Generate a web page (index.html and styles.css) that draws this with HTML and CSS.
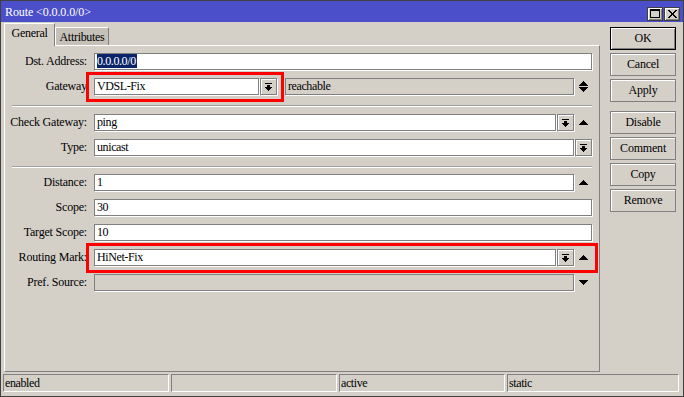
FILE: index.html
```html
<!DOCTYPE html>
<html>
<head>
<meta charset="utf-8">
<link rel="stylesheet" href="styles.css">
</head>
<body>
<div class="window">
  <div class="titlebar">
    <span class="title">Route &lt;0.0.0.0/0&gt;</span>
    <div class="tbtns">
      <span class="tbtn"><svg width="10" height="9" viewBox="0 0 10 9" shape-rendering="crispEdges"><rect x="0" y="0" width="10" height="2" fill="#000"/><rect x="0" y="0" width="1" height="9" fill="#000"/><rect x="9" y="0" width="1" height="9" fill="#000"/><rect x="0" y="8" width="10" height="1" fill="#000"/></svg></span>
      <span class="tbtn"><svg width="9" height="8" viewBox="0 0 9 8" shape-rendering="crispEdges"><path d="M0 0h2l2.5 3 2.5-3h2l-3.5 4 3.5 4h-2l-2.5-3-2.5 3h-2l3.5-4z" fill="#000"/></svg></span>
    </div>
  </div>
  <div class="main">
    <div class="left">
      <div class="tabs">
        <div class="tab active">General</div>
        <div class="tab inactive">Attributes</div>
      </div>
      <div class="panel">
        <div class="row">
          <div class="label">Dst. Address:</div>
          <div class="field grow"><span class="sel">0.0.0.0/0</span></div>
        </div>
        <div class="row">
          <div class="label">Gateway</div>
          <div class="field gw">VDSL-Fix</div>
          <div class="slot"><span class="dd"><svg width="9" height="8" viewBox="0 0 9 8" shape-rendering="crispEdges"><rect x="1" y="0" width="7" height="1"/><rect x="3" y="2" width="3" height="2"/><rect x="1" y="4" width="7" height="1"/><rect x="2" y="5" width="5" height="1"/><rect x="3" y="6" width="3" height="1"/><rect x="4" y="7" width="1" height="1"/></svg></span></div>
          <div class="field grow disabled reach">reachable</div>
          <div class="slot icon"><svg width="9" height="11" viewBox="0 0 9 11" shape-rendering="crispEdges"><rect x="4" y="0" width="1" height="1"/><rect x="3" y="1" width="3" height="1"/><rect x="2" y="2" width="5" height="1"/><rect x="1" y="3" width="7" height="1"/><rect x="0" y="4" width="9" height="1"/><rect x="0" y="6" width="9" height="1"/><rect x="1" y="7" width="7" height="1"/><rect x="2" y="8" width="5" height="1"/><rect x="3" y="9" width="3" height="1"/><rect x="4" y="10" width="1" height="1"/></svg></div>
        </div>
        <div class="sep sep1"></div>
        <div class="row">
          <div class="label">Check Gateway:</div>
          <div class="field grow">ping</div>
          <div class="slot"><span class="dd"><svg width="9" height="8" viewBox="0 0 9 8" shape-rendering="crispEdges"><rect x="1" y="0" width="7" height="1"/><rect x="3" y="2" width="3" height="2"/><rect x="1" y="4" width="7" height="1"/><rect x="2" y="5" width="5" height="1"/><rect x="3" y="6" width="3" height="1"/><rect x="4" y="7" width="1" height="1"/></svg></span></div>
          <div class="slot icon"><svg width="9" height="5" viewBox="0 0 9 5" shape-rendering="crispEdges"><rect x="4" y="0" width="1" height="1"/><rect x="3" y="1" width="3" height="1"/><rect x="2" y="2" width="5" height="1"/><rect x="1" y="3" width="7" height="1"/><rect x="0" y="4" width="9" height="1"/></svg></div>
        </div>
        <div class="row">
          <div class="label">Type:</div>
          <div class="field grow">unicast</div>
          <div class="slot"><span class="dd"><svg width="9" height="8" viewBox="0 0 9 8" shape-rendering="crispEdges"><rect x="1" y="0" width="7" height="1"/><rect x="3" y="2" width="3" height="2"/><rect x="1" y="4" width="7" height="1"/><rect x="2" y="5" width="5" height="1"/><rect x="3" y="6" width="3" height="1"/><rect x="4" y="7" width="1" height="1"/></svg></span></div>
        </div>
        <div class="sep sep2"></div>
        <div class="row">
          <div class="label">Distance:</div>
          <div class="field grow">1</div>
          <div class="slot icon"><svg width="9" height="5" viewBox="0 0 9 5" shape-rendering="crispEdges"><rect x="4" y="0" width="1" height="1"/><rect x="3" y="1" width="3" height="1"/><rect x="2" y="2" width="5" height="1"/><rect x="1" y="3" width="7" height="1"/><rect x="0" y="4" width="9" height="1"/></svg></div>
        </div>
        <div class="row">
          <div class="label">Scope:</div>
          <div class="field grow">30</div>
        </div>
        <div class="row">
          <div class="label">Target Scope:</div>
          <div class="field grow">10</div>
        </div>
        <div class="row">
          <div class="label">Routing Mark:</div>
          <div class="field grow">HiNet-Fix</div>
          <div class="slot"><span class="dd"><svg width="9" height="8" viewBox="0 0 9 8" shape-rendering="crispEdges"><rect x="1" y="0" width="7" height="1"/><rect x="3" y="2" width="3" height="2"/><rect x="1" y="4" width="7" height="1"/><rect x="2" y="5" width="5" height="1"/><rect x="3" y="6" width="3" height="1"/><rect x="4" y="7" width="1" height="1"/></svg></span></div>
          <div class="slot icon"><svg width="9" height="5" viewBox="0 0 9 5" shape-rendering="crispEdges"><rect x="4" y="0" width="1" height="1"/><rect x="3" y="1" width="3" height="1"/><rect x="2" y="2" width="5" height="1"/><rect x="1" y="3" width="7" height="1"/><rect x="0" y="4" width="9" height="1"/></svg></div>
        </div>
        <div class="row">
          <div class="label">Pref. Source:</div>
          <div class="field grow disabled"></div>
          <div class="slot icon"><svg width="9" height="5" viewBox="0 0 9 5" shape-rendering="crispEdges"><rect x="0" y="0" width="9" height="1"/><rect x="1" y="1" width="7" height="1"/><rect x="2" y="2" width="5" height="1"/><rect x="3" y="3" width="3" height="1"/><rect x="4" y="4" width="1" height="1"/></svg></div>
        </div>
        <div class="mark mark-gw"></div>
        <div class="mark mark-rm"></div>
      </div>
    </div>
    <div class="buttons">
      <div class="btn default">OK</div>
      <div class="btn">Cancel</div>
      <div class="btn">Apply</div>
      <div class="btn spaced">Disable</div>
      <div class="btn">Comment</div>
      <div class="btn">Copy</div>
      <div class="btn">Remove</div>
    </div>
  </div>
  <div class="status">
    <div class="cell">enabled</div>
    <div class="cell"></div>
    <div class="cell">active</div>
    <div class="cell last">static</div>
  </div>
</div>
</body>
</html>
```
FILE: styles.css
```css
* { box-sizing: border-box; }
html, body { margin: 0; padding: 0; }
body {
  width: 684px;
  height: 397px;
  overflow: hidden;
  background: #d4d0c8;
  font-family: "Liberation Serif", "Times New Roman", serif;
  font-size: 12px;
  color: #000;
}
.window {
  width: 684px;
  height: 397px;
  border: 1px solid #404040;
  background: #d4d0c8;
  display: flex;
  flex-direction: column;
}
.titlebar {
  height: 21px;
  background: #4c4fca;
  display: flex;
  align-items: center;
  justify-content: space-between;
  padding: 0 3px 0 4px;
}
.title {
  color: #fff;
  font-size: 12px;
  letter-spacing: -0.1px;
  line-height: 14px;
  margin-top: 1px;
}
.tbtns { display: flex; gap: 1px; margin-top: 4px; }
.tbtn {
  width: 16px;
  height: 14px;
  background: #d4d0c8;
  border: 1px solid #404040;
  box-shadow: inset 1px 1px #fff, inset -1px -1px #808080;
  display: flex;
  align-items: center;
  justify-content: center;
}
.tbtn svg { display: block; }
.main {
  display: flex;
  padding: 0 7px 0 3px;
  gap: 10px;
}
.left { width: 597px; display: flex; flex-direction: column; }
.tabs {
  height: 23px;
  display: flex;
  align-items: flex-end;
}
.tab {
  letter-spacing: -0.3px;
  display: flex;
  align-items: center;
  justify-content: center;
  border-top: 1px solid #fff;
  border-left: 1px solid #fff;
  border-right: 1px solid #808080;
}
.tab.active {
  width: 51px;
  height: 23px;
  margin-bottom: -1px;
  background: #d4d0c8;
  position: relative;
  z-index: 1;
  padding-bottom: 3px;
}
.tab.inactive {
  width: 54px;
  height: 18px;
  background: #c5c1b9;
  padding-top: 1px;
}
.panel {
  position: relative;
  height: 327px;
  border-top: 1px solid #fff;
  border-left: 1px solid #fff;
  border-right: 1px solid #808080;
  border-bottom: 1px solid #808080;
  padding: 7px 7px 0 0;
}
.row {
  display: flex;
  height: 25px;
  align-items: flex-start;
}
.label {
  width: 82px;
  margin-right: 7px;
  text-align: right;
  line-height: 17px;
  letter-spacing: -0.2px;
  white-space: nowrap;
}
.field {
  height: 17px;
  background: #fff;
  border: 1px solid #808080;
  box-shadow: 1px 1px 0 #fff;
  line-height: 15px;
  padding-left: 2px;
  letter-spacing: -0.4px;
  white-space: nowrap;
  overflow: hidden;
}
.field.grow { flex: 1; }
.field.gw { width: 165px; }
.field.disabled { background: #d4d0c8; }
.field.reach { margin-left: 8px; }
.sel { background: #0a246a; color: #fff; padding: 0 1px 0 0; }
.slot {
  width: 18px;
  height: 17px;
  flex: none;
  display: flex;
  align-items: center;
  justify-content: flex-end;
}
.slot.icon { justify-content: center; padding-left: 1px; }
.slot.icon svg { display: block; fill: #000; }
.dd {
  width: 17px;
  height: 17px;
  border: 1px solid #808080;
  box-shadow: inset 1px 1px #fff, 1px 1px 0 #fff;
  background: #d4d0c8;
  display: flex;
  align-items: center;
  justify-content: center;
}
.dd svg { display: block; fill: #000; }
.sep {
  margin-left: 7px;
  height: 2px;
  border-top: 1px solid #a0a0a0;
  border-bottom: 1px solid #fff;
}
.sep1 { margin-top: 2px; margin-bottom: 7px; }
.sep2 { margin-top: 2px; margin-bottom: 6px; }
.mark {
  position: absolute;
  border: 3px solid #ff0000;
  pointer-events: none;
}
.mark-gw { left: 81px; top: 26px; width: 198px; height: 30px; }
.mark-rm { left: 81px; top: 197px; width: 512px; height: 30px; }
.buttons {
  width: 66px;
  display: flex;
  flex-direction: column;
  gap: 3px;
  padding-top: 5px;
}
.btn {
  height: 23px;
  border: 1px solid #808080;
  box-shadow: inset 1px 1px #fff;
  display: flex;
  align-items: center;
  justify-content: center;
  font-size: 12px;
  letter-spacing: -0.2px;
}
.btn.default { border: 1px solid #000; box-shadow: inset 1px 1px #fff, inset -1px -1px #808080; }
.btn.spaced { margin-top: 6px; }
.status {
  display: flex;
  gap: 2px;
  padding: 0 4px 0 2px;
  margin-top: 2px;
}
.cell {
  width: 166px;
  height: 18px;
  border-top: 1px solid #808080;
  border-left: 1px solid #808080;
  border-bottom: 1px solid #fff;
  border-right: 1px solid #fff;
  line-height: 16px;
  padding-left: 1px;
  letter-spacing: -0.4px;
}
.cell.last { flex: 1; width: auto; }
```
